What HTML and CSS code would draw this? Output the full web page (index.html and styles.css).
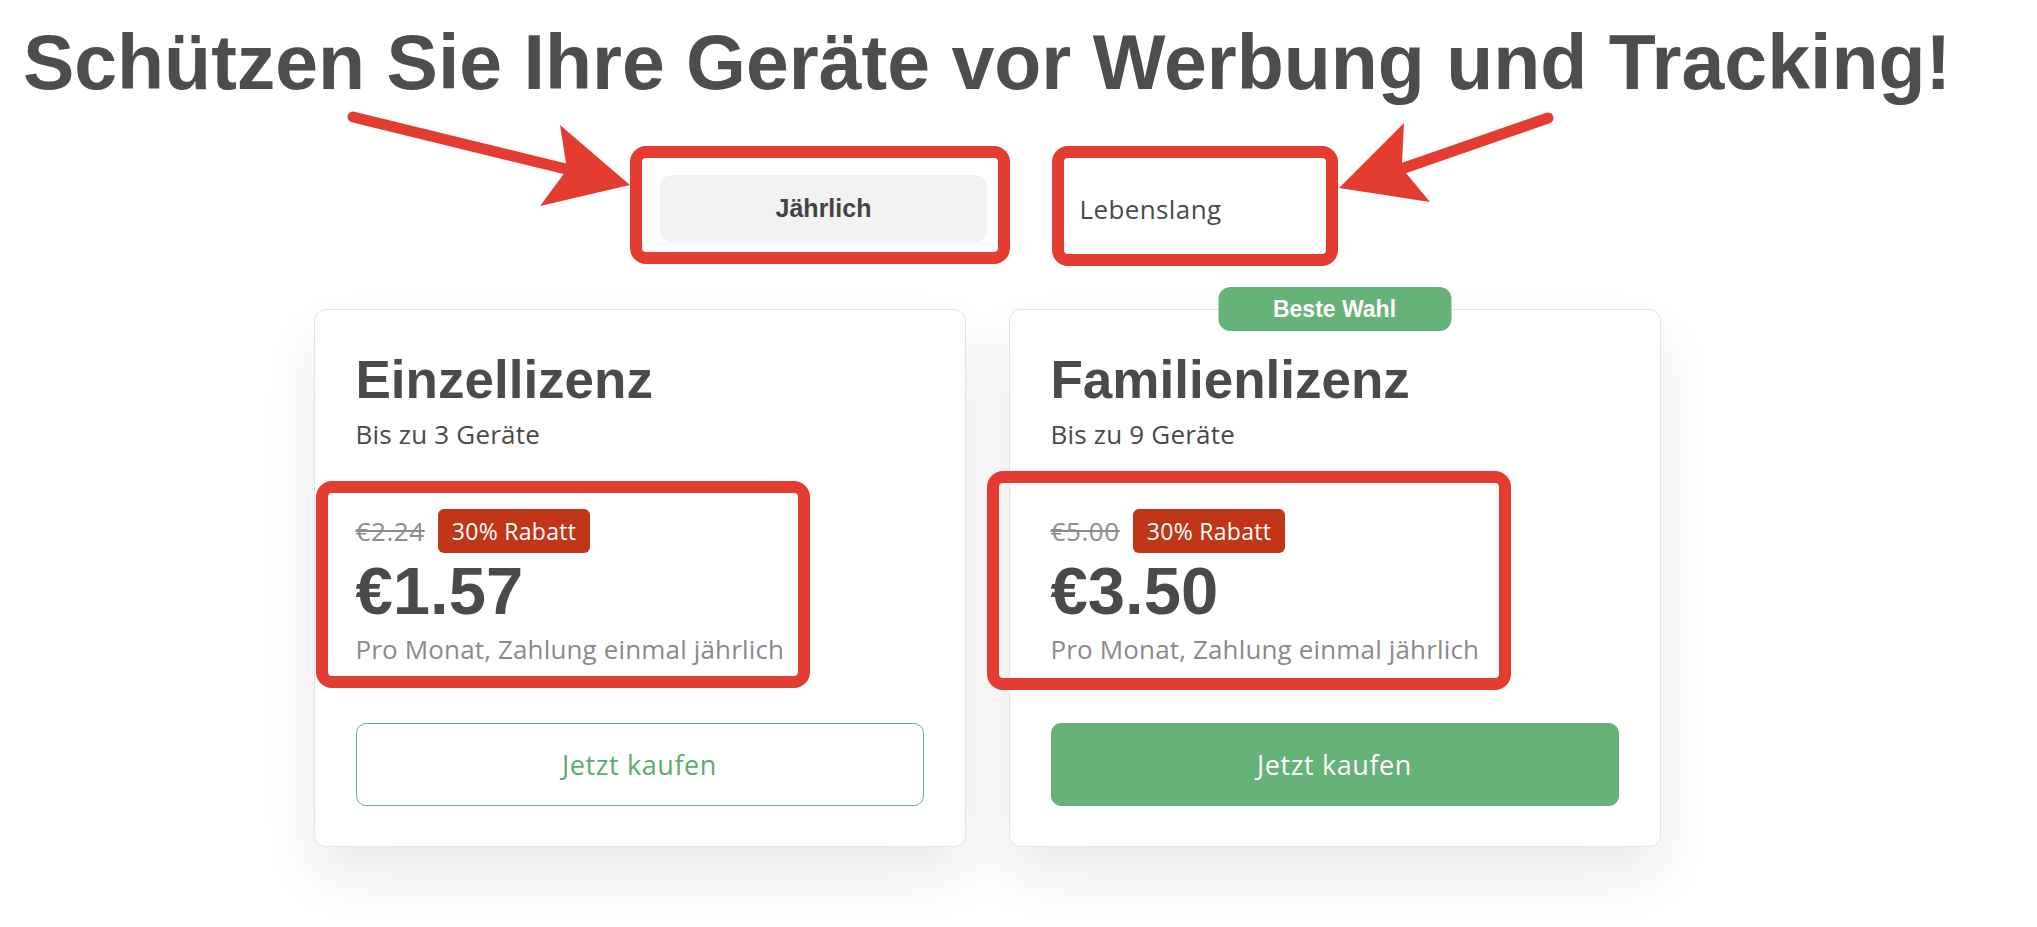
FILE: index.html
```html
<!DOCTYPE html>
<html lang="de">
<head>
    <meta charset="UTF-8">
    <meta name="viewport" content="width=device-width, initial-scale=1.0">
    <title>Preise - Werbeblocker</title>
    <link rel="stylesheet" href="styles.css">
</head>
<body>

    <div class="page">

        <!-- Headline -->
        <h1 class="headline">Schützen Sie Ihre Geräte vor Werbung und Tracking!</h1>

        <!-- Billing period switch -->
        <div class="billing-toggle">
            <button class="toggle-btn active">Jährlich</button>
            <button class="toggle-btn">Lebenslang</button>
        </div>

        <!-- Plans -->
        <div class="plans">
            <div class="plan">
                <h2 class="plan-name">Einzellizenz</h2>
                <p class="plan-devices">Bis zu 3 Geräte</p>
                <div class="price-row">
                    <span class="old-price">€2.24</span>
                    <span class="discount">30% Rabatt</span>
                </div>
                <div class="price">€1.57</div>
                <p class="billing-note">Pro Monat, Zahlung einmal jährlich</p>
                <button class="buy-btn">Jetzt kaufen</button>
            </div>

            <div class="plan">
                <span class="best-choice">Beste Wahl</span>
                <h2 class="plan-name">Familienlizenz</h2>
                <p class="plan-devices">Bis zu 9 Geräte</p>
                <div class="price-row">
                    <span class="old-price">€5.00</span>
                    <span class="discount">30% Rabatt</span>
                </div>
                <div class="price">€3.50</div>
                <p class="billing-note">Pro Monat, Zahlung einmal jährlich</p>
                <button class="buy-btn filled">Jetzt kaufen</button>
            </div>
        </div>

        <!-- Annotation layer (red marks drawn over the screenshot) -->
        <svg class="annotations" width="2037" height="927" viewBox="0 0 2037 927">
            <g fill="none" stroke="#e43c31" stroke-width="12">
                <rect x="636" y="152" width="368" height="106" rx="10"/>
                <rect x="1058" y="152" width="274" height="108" rx="10"/>
                <rect x="322" y="487" width="482" height="195" rx="10"/>
                <rect x="993" y="477" width="512" height="207" rx="10"/>
            </g>
            <g stroke="#e43c31" stroke-width="11" stroke-linecap="round">
                <line x1="353" y1="117" x2="566" y2="169"/>
                <line x1="1548" y1="118" x2="1404" y2="168"/>
            </g>
            <g fill="#e43c31">
                <polygon points="560,125 630,185 540,206 563,175 566,163"/>
                <polygon points="1404,123 1339,188 1430,202 1406,173 1402,162"/>
            </g>
        </svg>

    </div>

</body>
</html>
```

FILE: styles.css
```css
/* General */
body {
    margin: 0;
    background: #ffffff;
    color: #4a4a4a;
    font-family: "Open Sans", Arial, sans-serif;
    overflow: hidden;
}

.page {
    position: relative;
    width: 1974px;
    height: 927px;
    padding-top: 24px;
    box-sizing: border-box;
}

/* Headline */
.headline {
    margin: 0;
    font-family: "Liberation Sans", Arial, sans-serif;
    font-size: 77px;
    line-height: 77px;
    font-weight: 700;
    color: #4d4d4d;
    text-align: center;
}

/* Toggle */
.billing-toggle {
    display: flex;
    justify-content: center;
    margin-top: 74px;
}

.toggle-btn {
    width: 327px;
    height: 67px;
    border: none;
    border-radius: 12px;
    background: transparent;
    color: #4a4a4a;
    font-family: "Open Sans", Arial, sans-serif;
    font-size: 26px;
    letter-spacing: 0.4px;
    cursor: pointer;
}

.toggle-btn.active {
    background: #f2f2f2;
    font-family: "Liberation Sans", Arial, sans-serif;
    font-size: 25px;
    font-weight: 700;
    letter-spacing: 0;
    color: #444;
}

/* Plans */
.plans {
    display: flex;
    justify-content: center;
    gap: 43px;
    margin-top: 67px;
}

.plan {
    position: relative;
    box-sizing: border-box;
    width: 652px;
    padding: 40px 41px;
    background: #fff;
    border: 1px solid #e3e3e3;
    border-radius: 12px;
    box-shadow: 0 28px 60px rgba(0, 0, 0, 0.09);
}

.best-choice {
    position: absolute;
    top: -23px;
    left: 50%;
    transform: translateX(-50%);
    width: 233px;
    height: 44px;
    line-height: 44px;
    border-radius: 12px;
    background: #66b279;
    color: #fff;
    text-align: center;
    font-family: "Liberation Sans", Arial, sans-serif;
    font-size: 23px;
    font-weight: 700;
}

.plan-name {
    margin: 0;
    font-family: "Liberation Sans", Arial, sans-serif;
    font-size: 53px;
    line-height: 60px;
    font-weight: 700;
    color: #4a4a4a;
}

.plan-devices {
    margin: 7px 0 0;
    font-size: 26px;
    line-height: 34px;
    letter-spacing: 0.2px;
    color: #4a4a4a;
}

.price-row {
    display: flex;
    align-items: center;
    gap: 13px;
    margin-top: 58px;
}

.old-price {
    font-size: 26px;
    letter-spacing: 0.6px;
    color: #8c8c8c;
    text-decoration: line-through;
}

.discount {
    height: 44px;
    line-height: 44px;
    padding: 0 14px;
    border-radius: 6px;
    background: #c03617;
    color: #fff;
    font-size: 23px;
    letter-spacing: 0.3px;
}

.price {
    margin-top: 3px;
    font-family: "Liberation Sans", Arial, sans-serif;
    font-size: 67px;
    line-height: 70px;
    font-weight: 700;
    color: #4a4a4a;
}

.billing-note {
    margin: 6px 0 0;
    font-size: 26px;
    line-height: 34px;
    letter-spacing: 0.15px;
    color: #8a8a8a;
}

.buy-btn {
    display: block;
    width: 100%;
    height: 83px;
    margin-top: 57px;
    border: 1px solid #66b279;
    border-radius: 10px;
    background: #fff;
    color: #5faa70;
    font-family: "Open Sans", Arial, sans-serif;
    font-size: 27px;
    letter-spacing: 0.6px;
    cursor: pointer;
}

.buy-btn.filled {
    background: #66b279;
    color: #fff;
}

/* Annotations */
.annotations {
    position: absolute;
    top: 0;
    left: 0;
    pointer-events: none;
}
```
